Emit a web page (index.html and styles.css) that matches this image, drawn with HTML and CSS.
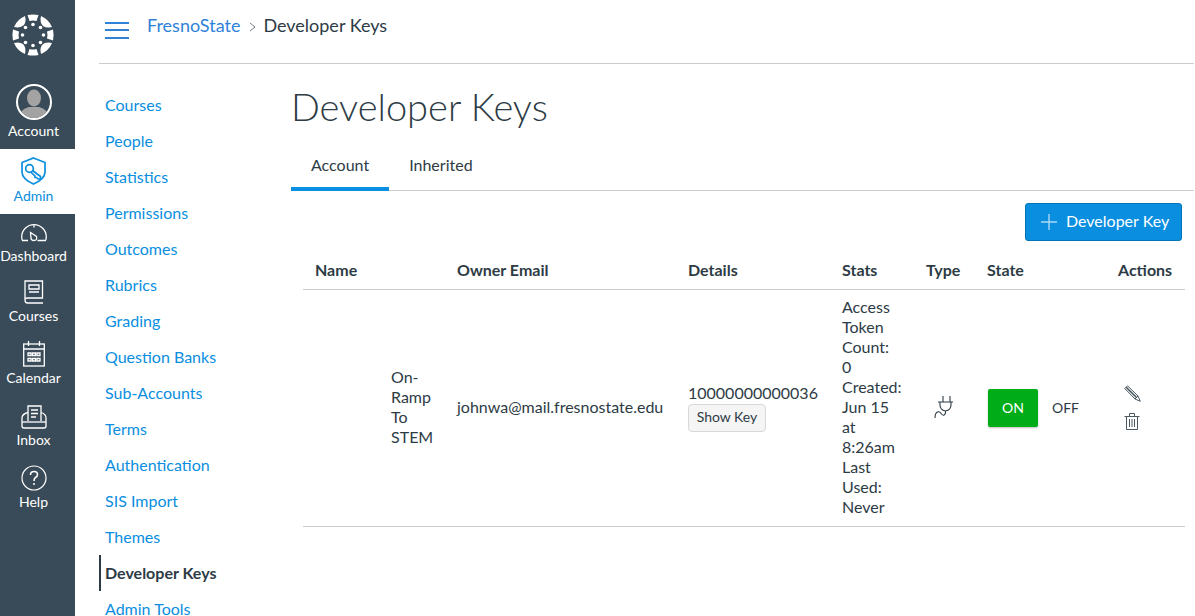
FILE: index.html
```html
<!DOCTYPE html>
<html lang="en">
<head>
    <meta charset="UTF-8">
    <title>Developer Keys</title>
    <link rel="stylesheet" href="styles.css">
</head>
<body>
    <nav class="global-nav">
        <a class="logo" href="#">
            <svg width="44" height="44" viewBox="0 0 44 44" fill="#fff">
                <defs>
                    <path id="petal-big" d="M3 14 A20.5 20.5 0 0 1 14 3 Q15.5 8.5 13 12 Q9.5 15.5 3 14 Z"/>
                    <path id="petal-small" d="M16.5 2 Q22 0.8 27.5 2 L25.5 8 Q22 7 18.5 8 Z"/>
                </defs>
                <use href="#petal-big"/>
                <use href="#petal-big" transform="rotate(90 22 22)"/>
                <use href="#petal-big" transform="rotate(180 22 22)"/>
                <use href="#petal-big" transform="rotate(270 22 22)"/>
                <use href="#petal-small"/>
                <use href="#petal-small" transform="rotate(90 22 22)"/>
                <use href="#petal-small" transform="rotate(180 22 22)"/>
                <use href="#petal-small" transform="rotate(270 22 22)"/>
                <circle cx="22" cy="11.5" r="1.8"/>
                <circle cx="22" cy="32.5" r="1.8"/>
                <circle cx="11.5" cy="22" r="1.8"/>
                <circle cx="32.5" cy="22" r="1.8"/>
                <circle cx="14.5" cy="14.5" r="1.8"/>
                <circle cx="29.5" cy="14.5" r="1.8"/>
                <circle cx="14.5" cy="29.5" r="1.8"/>
                <circle cx="29.5" cy="29.5" r="1.8"/>
            </svg>
        </a>
        <a class="nav-item account" href="#">
            <span class="avatar">
                <svg width="32" height="32" viewBox="0 0 32 32" fill="#a3a3a3">
                    <ellipse cx="16" cy="12" rx="7" ry="8.5"/>
                    <path d="M1 32 Q2 23 11 21 L21 21 Q30 23 31 32 Z"/>
                </svg>
            </span>
            Account
        </a>
        <a class="nav-item active" href="#">
            <svg width="25" height="28" viewBox="0 0 25 28" fill="none" stroke="#0a8ee0" stroke-width="1.7">
                <path d="M12.5 1 L24 5.5 V15 Q24 22 12.5 27 Q1 22 1 15 V5.5 Z"/>
                <circle cx="8.5" cy="11.5" r="3.8"/>
                <path d="M11.5 13.5 L19.5 19.5 V22 H17 L15.5 20.5 H14 V19 L10 15.3" stroke-linejoin="round"/>
            </svg>
            Admin
        </a>
        <a class="nav-item dash" href="#">
            <svg width="26" height="18" viewBox="0 0 26 18" fill="none" stroke="#fff" stroke-width="1.3">
                <path d="M7 16.5 H1.5 Q0.7 15 0.7 13 A12.3 12.3 0 0 1 25.3 13 Q25.3 15 24.5 16.5 H16.5"/>
                <path d="M9.5 8.5 L15.5 12.5 Q16.5 16.5 13 16.5 Q10 16.5 10 14 Z"/>
                <path d="M13 1 V3.5"/>
            </svg>
            Dashboard
        </a>
        <a class="nav-item courses" href="#">
            <svg width="20" height="24" viewBox="0 0 20 24" fill="none" stroke="#fff" stroke-width="1.3">
                <path d="M1 20 V1 H18.5 V18 H3.5 Q1 18 1 20 Q1 23 3.5 23 H19"/>
                <path d="M5 5 H15 V9 H5 Z M5 12 H15"/>
            </svg>
            Courses
        </a>
        <a class="nav-item" href="#">
            <svg width="22" height="26" viewBox="0 0 22 26" fill="none" stroke="#fff" stroke-width="1.3">
                <rect x="0.7" y="3" width="20.6" height="22"/>
                <path d="M0.7 8 H21.3 M5.5 0 V5 M16.5 0 V5"/>
                <path d="M5 12 H8 V14.5 H5 Z M9.5 12 H12.5 V14.5 H9.5 Z M14 12 H17 V14.5 H14 Z M5 17.5 H8 V20 H5 Z M9.5 17.5 H12.5 V20 H9.5 Z M14 17.5 H17 V20 H14 Z"/>
            </svg>
            Calendar
        </a>
        <a class="nav-item" href="#">
            <svg width="26" height="24" viewBox="0 0 26 24" fill="none" stroke="#fff" stroke-width="1.3">
                <path d="M7 16 V1 H20 V16"/>
                <path d="M10 5 H17 M10 8.5 H17 M10 12 H15"/>
                <path d="M7 7.5 Q1 9 1 13 V21 Q1 23 3 23 H23 Q25 23 25 21 V13 Q25 9 20 7.5"/>
                <path d="M1 17 H25"/>
            </svg>
            Inbox
        </a>
        <a class="nav-item" href="#">
            <svg width="26" height="26" viewBox="0 0 26 26" fill="none" stroke="#fff" stroke-width="1.2">
                <circle cx="13" cy="13" r="12"/>
                <path d="M9.5 10 Q9.5 6.5 13 6.5 Q16.5 6.5 16.5 9.5 Q16.5 11.5 14.5 12.5 Q13 13.5 13 16" stroke-width="1.6"/>
                <circle cx="13" cy="19" r="1" fill="#fff" stroke="none"/>
            </svg>
            Help
        </a>
    </nav>

    <div class="page">
        <header class="top-bar">
            <button class="menu-btn" type="button" aria-label="Menu"><span></span><span></span><span></span></button>
            <a class="crumb-link" href="#">FresnoState</a>
            <svg class="crumb-sep" width="7" height="10" viewBox="0 0 7 10" fill="none" stroke="#73818c" stroke-width="1"><path d="M1 1 L6 5 L1 9"/></svg>
            <span class="crumb-current">Developer Keys</span>
        </header>

        <div class="body-row">
            <ul class="side-menu">
                <li><a href="#">Courses</a></li>
                <li><a href="#">People</a></li>
                <li><a href="#">Statistics</a></li>
                <li><a href="#">Permissions</a></li>
                <li><a href="#">Outcomes</a></li>
                <li><a href="#">Rubrics</a></li>
                <li><a href="#">Grading</a></li>
                <li><a href="#">Question Banks</a></li>
                <li><a href="#">Sub-Accounts</a></li>
                <li><a href="#">Terms</a></li>
                <li><a href="#">Authentication</a></li>
                <li><a href="#">SIS Import</a></li>
                <li><a href="#">Themes</a></li>
                <li class="current"><a href="#">Developer Keys</a></li>
                <li><a href="#">Admin Tools</a></li>
            </ul>

            <main class="main">
                <h1>Developer Keys</h1>
                <div class="tabs">
                    <a class="tab tab-on" href="#">Account</a>
                    <a class="tab" href="#">Inherited</a>
                </div>
                <div class="actions-row">
                    <button class="add-btn" type="button">
                        <svg width="16" height="16" viewBox="0 0 16 16" stroke="#a9d8f5" stroke-width="1.4"><path d="M8 0 V16 M0 8 H16"/></svg>
                        Developer Key
                    </button>
                </div>
                <table class="keys">
                    <thead>
                        <tr>
                            <th class="col-name">Name</th>
                            <th class="col-email">Owner Email</th>
                            <th class="col-details">Details</th>
                            <th class="col-stats">Stats</th>
                            <th class="col-type">Type</th>
                            <th class="col-state">State</th>
                            <th class="col-actions">Actions</th>
                        </tr>
                    </thead>
                    <tbody>
                        <tr>
                            <td class="name-cell"><div class="key-name">On-Ramp To STEM</div></td>
                            <td>johnwa@mail.fresnostate.edu</td>
                            <td>10000000000036<br><button class="show-key" type="button">Show Key</button></td>
                            <td>Access Token Count: 0<br>Created: Jun 15 at 8:26am<br>Last Used: Never</td>
                            <td>
                                <svg class="plug" width="21" height="24" viewBox="0 0 21 24" fill="none" stroke="#2d3b45" stroke-width="1.1">
                                    <path d="M10 1 V7 M17 1 V7 M5 7 H20 M7 7 V10 Q7 15 12.5 16 Q18 15 18 10 V7 M12.5 16 V18 Q11 22 8.5 19 Q7 16 4.5 17 Q2 18 2 23"/>
                                </svg>
                            </td>
                            <td>
                                <div class="toggle"><span class="on">ON</span><span class="off">OFF</span></div>
                            </td>
                            <td>
                                <div class="row-icons">
                                    <svg width="17" height="17" viewBox="0 0 17 17" fill="none" stroke="#4a5862" stroke-width="1">
                                        <path d="M0.8 3.5 L3.5 0.8 L14 11 L16.3 16.3 L11 14 Z"/>
                                        <path d="M2.2 2.2 L12.5 12.5" stroke-width="1.6"/>
                                        <path d="M11 14 L14 11"/>
                                    </svg>
                                    <svg width="16" height="18" viewBox="0 0 16 18" fill="none" stroke="#4a5862" stroke-width="1">
                                        <path d="M0.5 4.5 H15.5 M5.5 4.5 V1.5 H10.5 V4.5 M2.5 4.5 V17.5 H13.5 V4.5 M5.5 7 V15 M8 7 V15 M10.5 7 V15"/>
                                    </svg>
                                </div>
                            </td>
                        </tr>
                    </tbody>
                </table>
            </main>
        </div>
    </div>
</body>
</html>
```

FILE: styles.css
```css
html, body {
    height: 100%;
}
body {
    margin: 0;
    display: flex;
    height: 616px;
    overflow: hidden;
    font-family: Lato, "Open Sans", sans-serif;
    font-size: 16px;
    color: #2d3b45;
    background-color: #fff;
}
a {
    text-decoration: none;
}
.global-nav {
    flex: 0 0 75px;
    width: 75px;
    padding-right: 8px;
    box-sizing: border-box;
    background-color: #394b58;
    display: flex;
    flex-direction: column;
    overflow: hidden;
}
.logo {
    display: flex;
    justify-content: center;
    padding: 13px 1px 0 0;
    height: 71px;
}
.nav-item {
    display: flex;
    flex-direction: column;
    align-items: center;
    justify-content: flex-end;
    flex: none;
    height: 62px;
    padding-bottom: 10px;
    box-sizing: border-box;
    font-size: 14px;
    line-height: 17px;
    color: #fff;
    white-space: nowrap;
}
.nav-item svg {
    margin-bottom: 2px;
}
.dash,
.courses {
    height: 60px;
}
.dash svg {
    margin-bottom: 5px;
}
.courses svg {
    margin-bottom: 3px;
}
.account {
    height: 65px;
}
.avatar {
    width: 32px;
    height: 32px;
    border: 2px solid #fff;
    border-radius: 50%;
    background-color: #394b58;
    overflow: hidden;
    margin-bottom: 2px;
}
.avatar svg {
    display: block;
    margin: 0;
}
.active {
    background-color: #fff;
    color: #0a8ee0;
    height: 65px;
    margin-right: -8px;
    padding-right: 8px;
}
.page {
    flex: 1;
    min-width: 0;
    padding: 0 1px 0 24px;
}
.top-bar {
    height: 52px;
    border-bottom: 1px solid #c7cdd1;
    display: flex;
    align-items: center;
    padding-bottom: 11px;
    font-size: 18px;
    line-height: 22px;
}
.crumb-link, .crumb-current {
    margin-top: -2px;
}
.menu-btn {
    width: 24px;
    height: 17px;
    padding: 0;
    margin: 8px 18px 0 6px;
    border: none;
    background: none;
    display: flex;
    flex-direction: column;
    justify-content: space-between;
}
.menu-btn span {
    display: block;
    height: 2px;
    background-color: #2f82d8;
}
.crumb-link {
    color: #2f82d8;
}
.crumb-sep {
    margin: 2px 7px 0 9px;
}
.body-row {
    display: flex;
}
.side-menu {
    flex: 0 0 192px;
    width: 192px;
    margin: 0;
    padding: 23px 0 0;
    list-style: none;
}
.side-menu li {
    height: 36px;
    line-height: 36px;
    padding-left: 6px;
    box-sizing: border-box;
    white-space: nowrap;
}
.side-menu a {
    color: #0a8ee0;
}
.side-menu .current {
    border-left: 2px solid #2d3b45;
    padding-left: 4px;
}
.side-menu .current a {
    color: #2d3b45;
    font-weight: bold;
}
.main {
    flex: 1;
    min-width: 0;
}
h1 {
    margin: 0;
    padding-top: 20px;
    font-size: 38px;
    line-height: 44px;
    font-weight: 300;
    color: #2d3b45;
}
.tabs {
    display: flex;
    margin-top: 22px;
    border-bottom: 1px solid #c7cdd1;
    height: 40px;
}
.tab {
    height: 40px;
    padding: 0 20px;
    line-height: 30px;
    color: #2d3b45;
    box-sizing: border-box;
}
.tab-on {
    border-bottom: 4px solid #0a8ee0;
    height: 41px;
}
.actions-row {
    display: flex;
    justify-content: flex-end;
    padding: 12px 12px 0 0;
}
.add-btn {
    display: flex;
    align-items: center;
    gap: 9px;
    height: 38px;
    width: 157px;
    padding: 0 0 3px 15px;
    border: 1px solid #0374b5;
    border-radius: 3px;
    background-color: #0a8ee0;
    color: #fff;
    font-family: inherit;
    font-size: 16px;
}
.add-btn svg {
    margin-top: 3px;
}
.keys {
    width: 882px;
    margin: 8px 0 0 12px;
    border-collapse: collapse;
    table-layout: fixed;
    line-height: 20px;
}
.keys th {
    padding: 11px 12px 9px;
    text-align: left;
    font-weight: bold;
    border-bottom: 1px solid #c7cdd1;
    line-height: 20px;
    white-space: nowrap;
}
.keys td {
    padding: 7px 12px 9px;
    border-bottom: 1px solid #c7cdd1;
    vertical-align: middle;
    text-align: left;
}
.col-name { width: 142px; box-sizing: border-box; }
.col-email { width: 231px; box-sizing: border-box; }
.col-details { width: 154px; box-sizing: border-box; }
.col-stats { width: 84px; box-sizing: border-box; }
.col-type { width: 61px; box-sizing: border-box; }
.col-state { width: 131px; box-sizing: border-box; }
.col-actions { width: 79px; box-sizing: border-box; }
.keys .name-cell {
    padding-left: 88px;
}
.show-key {
    display: block;
    width: 78px;
    height: 28px;
    padding: 0 0 3px;
    margin-top: 1px;
    border: 1px solid #d5d9dc;
    border-radius: 4px;
    background-color: #f5f5f5;
    color: #2d3b45;
    font-family: inherit;
    font-size: 14px;
}
.plug {
    display: block;
    margin: 0 0 0 7px;
}
.toggle {
    display: flex;
    align-items: center;
    margin: 2px 0 0 1px;
}
.on {
    width: 50px;
    height: 38px;
    line-height: 38px;
    text-align: center;
    font-size: 14px;
    color: #fff;
    background-color: #00ac18;
    border-radius: 2px;
    box-shadow: 0 1px 2px rgba(0,0,0,0.25);
}
.off {
    margin-left: 14px;
    font-size: 14px;
}
.row-icons {
    display: flex;
    flex-direction: column;
    align-items: flex-start;
    gap: 10px;
    padding-left: 6px;
}
```
